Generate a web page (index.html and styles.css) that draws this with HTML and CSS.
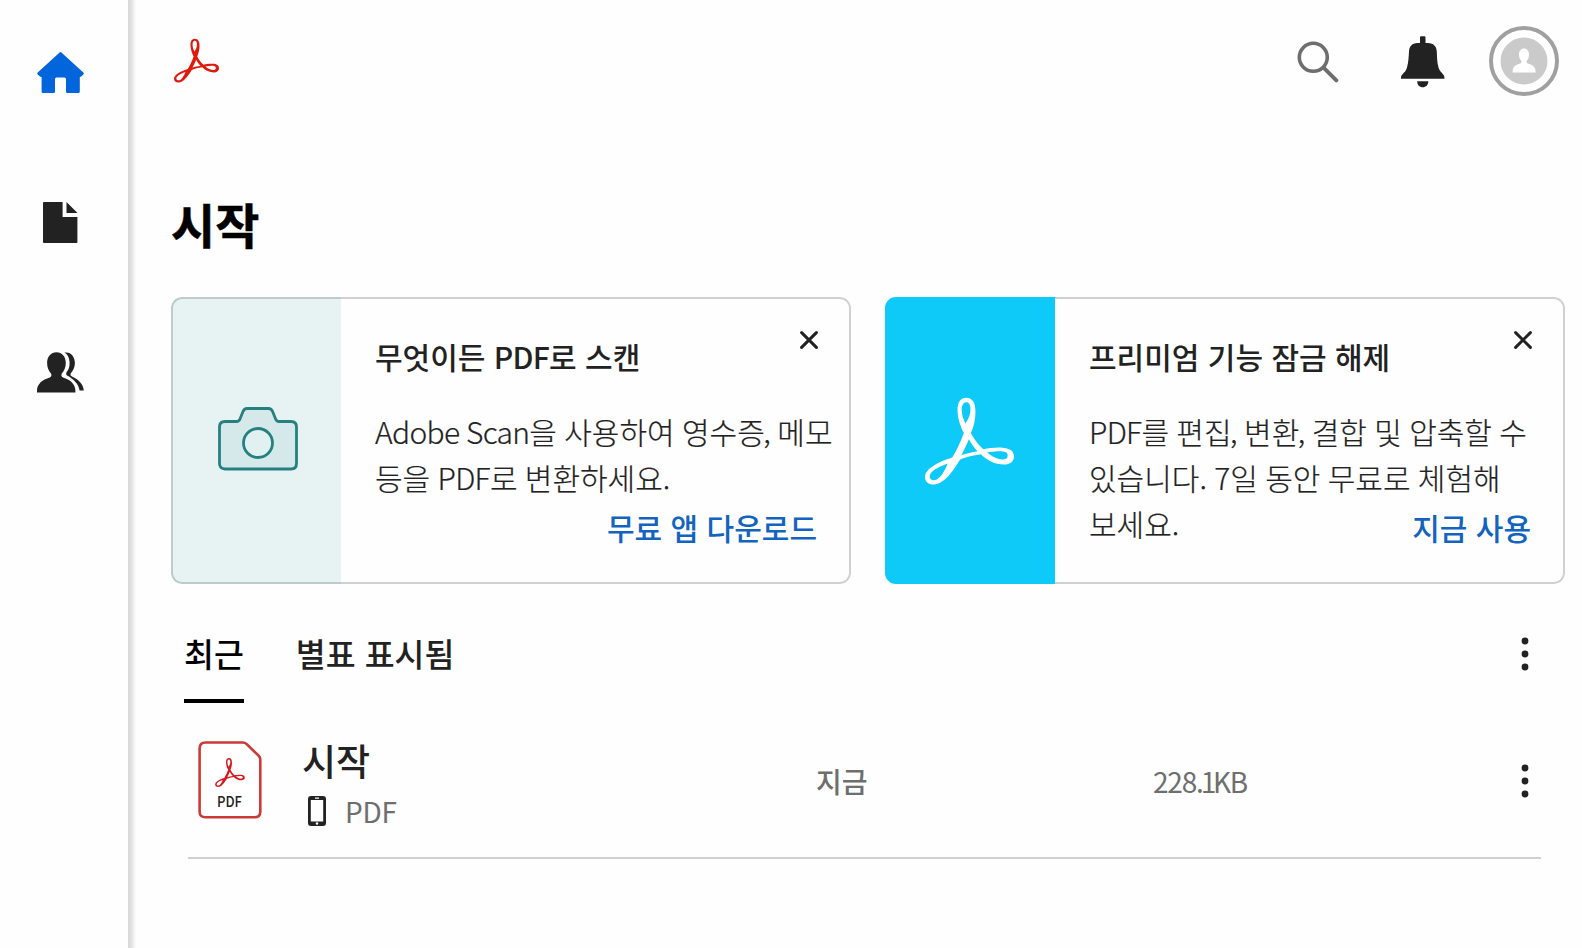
FILE: index.html
```html
<!DOCTYPE html>
<html lang="ko">
<head>
    <meta charset="UTF-8">
    <meta name="viewport" content="width=device-width, initial-scale=1.0">
    <title>Acrobat</title>
    <link rel="stylesheet" href="styles.css">
</head>
<body>
    <svg class="sprite" width="0" height="0">
        <symbol id="acrobat" viewBox="0 0 268 262">
            <path fill="currentColor" fill-rule="evenodd" d="M124 1C144 1 152 18 152 42C152 66 147 88 138 107C148 125 160 143 176 156C190 153 214 150 232 151C254 152 268 160 268 177C268 193 256 202 238 202C210 202 188 190 168 171C146 174 124 179 106 187C88 215 60 262 26 262C10 262 0 253 0 240C0 215 38 195 82 181C96 158 108 132 117 107C106 86 98 62 98 36C98 14 108 1 124 1ZM124 14C112 14 110 30 111 42C112 56 116 66 122 78C132 64 137 48 137 36C137 22 133 14 124 14ZM132 126C126 142 118 157 110 173C124 169 142 165 158 162C148 152 139 139 132 126ZM187 166C202 178 218 187 234 187C244 187 249 183 249 175C249 164 238 162 226 162C212 162 199 164 187 166ZM68 199C44 208 14 222 14 238C14 245 19 249 27 249C44 249 60 222 68 199Z"/>
        </symbol>
        <symbol id="dots" viewBox="0 0 8 34">
            <circle cx="4" cy="4" r="3.4"/>
            <circle cx="4" cy="17" r="3.4"/>
            <circle cx="4" cy="30" r="3.4"/>
        </symbol>
        <symbol id="close" viewBox="0 0 18 18">
            <path d="M1.6 1.6L16.4 16.4M16.4 1.6L1.6 16.4" fill="none" stroke="#222" stroke-width="3" stroke-linecap="round"/>
        </symbol>
    </svg>
    <div class="app">
        <nav class="sidebar">
            <a class="nav-item active">
                <svg width="47" height="41" viewBox="0 0 47 41"><path d="M22.6.5Q23.5-.3 24.4.5L46.3 20.4Q47.3 21.4 46.3 22.4L44.5 24.2Q43.7 25 42.8 25V39.5Q42.8 41 41.3 41H30.3Q29 41 29 39.7V27Q29 25.5 27.5 25.5H19.5Q18 25.5 18 27V39.7Q18 41 16.7 41H6Q4.6 41 4.6 39.5V25Q3.5 25 2.7 24.2L.7 22.4Q-.3 21.4.7 20.4Z"/></svg>
            </a>
            <a class="nav-item">
                <svg width="35" height="41" viewBox="0 0 35 41"><path d="M1 0H19.6V15H34.4V40Q34.4 41 33.4 41H1Q0 41 0 40V1Q0 0 1 0ZM23.5 0L34.5 11H23.5Z"/></svg>
            </a>
            <a class="nav-item">
                <svg width="47" height="41" viewBox="0 0 47 41"><path d="M19.5.3C25 .3 28.8 4.5 28.8 11C28.8 15.5 27 19 24.8 21.5C24 23 24.3 24.8 26 25.5C33 27.6 38.4 32 38.4 38.7V40.5H0V38.7C0 32 5.5 27.6 12.8 25.5C14.6 24.8 14.8 23 14 21.5C11.8 19 10.1 15.5 10.1 11C10.1 4.5 14 .3 19.5.3Z"/><path d="M27.5.6C33.5-.6 37.9 4.5 37.9 11C37.9 15.5 36 18.5 34 21C33 22.7 33.6 23.8 35 24.5C41.5 27.5 46.3 32 46.8 38.5H42.6C41.8 32 36.5 26.8 30 23.4C28.8 22.5 29 20.8 30 19.5C32.3 16.5 32.8 13.6 32.5 9.5C32.2 5.4 30.4 2.4 27.5.6Z"/></svg>
            </a>
        </nav>
        <main class="main">
            <header class="topbar">
                <svg class="brand" width="45" height="45"><use href="#acrobat"/></svg>
                <div class="tools">
                    <svg class="search" width="42" height="42" viewBox="0 0 42 42"><circle cx="16.3" cy="16.3" r="14" fill="none" stroke="#6e6e6e" stroke-width="3.6"/><path d="M26.8 26.8L39.3 39.3" stroke="#6e6e6e" stroke-width="4" stroke-linecap="round"/></svg>
                    <svg class="bell" width="44" height="52" viewBox="0 0 44 52"><path d="M19 1.5Q19 .3 20.2 .3H23.3Q24.5.3 24.5 1.5V7H27C32.5 7 35.5 10.5 35.8 15.5C36 21 36 26 37.5 31.5C38.5 34.8 40.5 36.3 42 38.3Q43.4 40 43.4 41.3V42.7H0V41.3Q0 40 1.5 38.3C3.4 36.3 5 34.8 6 31.5C7.5 26 7.7 21 8 15.5C8.3 10.5 11 7 16.5 7H19ZM16.2 45.3H27.3C27.3 49 25 51.3 21.7 51.3S16.2 49 16.2 45.3Z" fill="#222"/></svg>
                    <svg class="avatar" width="70" height="70" viewBox="0 0 70 70"><circle cx="35" cy="35" r="33" fill="#fff" stroke="#a0a0a0" stroke-width="4"/><circle cx="35" cy="35" r="23.5" fill="#cacaca"/><path d="M35 22.5C38 22.5 40 25 40 28.5C40 31.5 39 33.5 37.6 35C37.2 36.6 38 37.3 39.5 37.8C43.5 39 46.6 41 46.6 45.5V46.5H23.6V45.5C23.6 41 26.5 39 30.5 37.8C32 37.3 32.8 36.6 32.4 35C31 33.5 30 31.5 30 28.5C30 25 32 22.5 35 22.5Z" fill="#fff"/></svg>
                </div>
            </header>

            <h1>시작</h1>

            <section class="cards">
                <article class="card">
                    <div class="card-art scan">
                        <svg width="80" height="64" viewBox="0 0 80 64"><path d="M7 14.5H18.5C20.5 14.5 21.3 13.8 22 12L25 4.5C25.8 2.5 27 1.5 29 1.5H50.5C52.5 1.5 53.8 2.5 54.6 4.5L57.6 12C58.3 13.8 59.2 14.5 61 14.5H73Q78.5 14.5 78.5 20V56.5Q78.5 62 73 62H7Q1.5 62 1.5 56.5V20Q1.5 14.5 7 14.5Z" fill="#d6e9ea" stroke="#268080" stroke-width="2.8"/><circle cx="40" cy="36" r="14.5" fill="#e1f0f0" stroke="#268080" stroke-width="2.8"/></svg>
                    </div>
                    <div class="card-body">
                        <h2>무엇이든 <span class="latin">PDF</span>로 스캔</h2>
                        <p><span class="latin">Adobe Scan</span>을 사용하여 영수증<span class="comma">,</span> 메모<br>등을 <span class="latin">PDF</span>로 변환하세요.</p>
                        <a class="card-link">무료 앱 다운로드</a>
                        <svg class="close" width="18" height="18"><use href="#close"/></svg>
                    </div>
                </article>
                <article class="card">
                    <div class="card-art premium">
                        <svg width="89" height="88"><use href="#acrobat"/></svg>
                    </div>
                    <div class="card-body">
                        <h2>프리미엄 기능 잠금 해제</h2>
                        <p><span class="latin">PDF</span>를 편집<span class="comma">,</span> 변환<span class="comma">,</span> 결합 및 압축할 수<br>있습니다. 7일 동안 무료로 체험해<br>보세요.</p>
                        <a class="card-link">지금 사용</a>
                        <svg class="close" width="18" height="18"><use href="#close"/></svg>
                    </div>
                </article>
            </section>

            <div class="tabs">
                <a class="tab selected">최근</a>
                <a class="tab">별표 표시됨</a>
                <svg class="more" width="8" height="34"><use href="#dots"/></svg>
            </div>

            <div class="file-row">
                <svg class="file-icon" width="64" height="78" viewBox="0 0 64 78">
                    <path d="M7.5 1.5H44.5Q47 1.5 48.7 3.2L60.5 14.5Q62.3 16.2 62.3 18.5V70.5Q62.3 76.3 56.5 76.3H7.5Q1.6 76.3 1.6 70.5V7.5Q1.6 1.5 7.5 1.5Z" fill="#fff" stroke="#cb3a36" stroke-width="2.6"/>
                    <use href="#acrobat" x="17" y="17" width="30" height="29"/>
                    <text x="31.5" y="66" text-anchor="middle" textLength="25" lengthAdjust="spacingAndGlyphs">PDF</text>
                </svg>
                <div class="file-name">
                    <div class="name">시작</div>
                    <div class="meta">
                        <svg width="18" height="30" viewBox="0 0 18 30"><path fill-rule="evenodd" d="M3 0H15Q18 0 18 3V27Q18 30 15 30H3Q0 30 0 27V3Q0 0 3 0ZM2.8 4V25.5H15.2V4ZM7 1.5V2.7H11V1.5ZM9 26.2A1.3 1.3 0 1 0 9 28.8A1.3 1.3 0 1 0 9 26.2Z" fill="#222"/></svg>
                        <span>PDF</span>
                    </div>
                </div>
                <div class="file-date">지금</div>
                <div class="file-size">228<span class="decimal">.1</span>KB</div>
                <svg class="more" width="8" height="34"><use href="#dots"/></svg>
            </div>
        </main>
    </div>
</body>
</html>
```
FILE: styles.css
```css
* {
    box-sizing: border-box;
}

body {
    margin: 0;
    background: #fefefe;
    color: #222;
    font-family: "Noto Sans CJK KR", sans-serif;
}

.sprite {
    position: absolute;
}

svg {
    display: block;
    flex: none;
}

h1, h2, p {
    margin: 0;
}

.app {
    display: flex;
    height: 948px;
    overflow: hidden;
}

/* sidebar */
.sidebar {
    flex: none;
    width: 136px;
    padding: 52px 16px 0 0;
    display: flex;
    flex-direction: column;
    align-items: center;
    gap: 109px;
    background: linear-gradient(to right, #fefefe 128px, #d8d8d8 128px, #e0e0e0 131px, #fefefe 136px);
}

.nav-item {
    display: block;
    fill: #222;
}

.nav-item.active {
    fill: #0265dc;
}

/* main column */
.main {
    flex: 1;
    padding: 0 17px 0 35px;
}

.topbar {
    display: flex;
    justify-content: space-between;
    height: 180px;
    padding: 0 6.5px 0 3px;
}

.brand {
    margin-top: 38px;
    color: #e1190c;
}

.tools {
    display: flex;
    align-items: flex-start;
}

.search {
    margin-top: 41px;
}

.bell {
    margin: 35.5px 0 0 62px;
}

.avatar {
    margin: 25.5px 0 0 44px;
}

h1 {
    height: 117px;
    padding-top: 9px;
    font-size: 48px;
    line-height: 68px;
    font-weight: 700;
    color: #000;
    -webkit-text-stroke: 0.5px #000;
}

/* promo cards */
.cards {
    display: flex;
    gap: 34px;
}

.card {
    flex: none;
    display: flex;
    width: 680px;
    height: 287px;
    border-radius: 11px;
    overflow: hidden;
}

.card-art {
    flex: none;
    width: 170px;
    display: flex;
    align-items: center;
    justify-content: center;
}

.scan {
    background: #e6f3f2;
    border: 2px solid #bfcaca;
    border-right: none;
    border-radius: 11px 0 0 11px;
    padding-left: 2px;
    padding-bottom: 3px;
}

.premium {
    background: #0dcaf8;
    color: #fff;
    padding-right: 1px;
}

.card-body {
    position: relative;
    flex: 1;
    padding: 34px 0 0 34px;
    border: 2px solid #d0d0d0;
    border-left: none;
    border-radius: 0 11px 11px 0;
    white-space: nowrap;
}

.card-body h2 {
    font-size: 30px;
    line-height: 46px;
    font-weight: 500;
}

.card-body p {
    margin-top: 29px;
    font-size: 30px;
    line-height: 46px;
    font-weight: 300;
    word-spacing: -1.1px;
    -webkit-text-stroke: 0.2px #222;
}

.latin {
    letter-spacing: -0.7px;
}

.comma {
    margin-left: -1.5px;
    letter-spacing: -0.8px;
}

.card-link {
    position: absolute;
    right: 32px;
    bottom: 32px;
    font-size: 30px;
    line-height: 46px;
    font-weight: 500;
    color: #1264bf;
}

.close {
    position: absolute;
    top: 32px;
    right: 31px;
}

/* tabs */
.tabs {
    display: flex;
    gap: 52px;
    height: 119px;
    padding: 46px 36px 0 13px;
}

.tab {
    height: 73px;
    font-size: 32.5px;
    line-height: 46px;
    font-weight: 500;
}

.tab.selected {
    color: #000;
    border-bottom: 4px solid #000;
}

.more {
    margin-left: auto;
    margin-top: 7px;
    fill: #222;
}

/* file list */
.file-row {
    display: flex;
    height: 156px;
    margin: 0 24px 0 17px;
    padding: 37px 12px 0 10px;
    border-bottom: 2px solid #d0d0d0;
}

.file-icon {
    margin-top: 1px;
    color: #d7191c;
}

.file-icon text {
    font-size: 15px;
    font-weight: 500;
    fill: #222;
}

.file-name {
    flex: none;
    width: 554px;
    padding-left: 40px;
}

.name {
    margin-top: -7px;
    font-size: 37px;
    line-height: 54px;
    font-weight: 500;
}

.meta {
    display: flex;
    align-items: center;
    gap: 19px;
    height: 48px;
    padding-left: 6px;
    font-size: 28px;
    letter-spacing: -0.3px;
    color: #6e6e6e;
}

.file-date, .file-size {
    margin-top: 20px;
    font-size: 28px;
    line-height: 42px;
    font-weight: 500;
    color: #6e6e6e;
}

.file-date {
    flex: none;
    width: 337px;
}

.file-size {
    font-weight: 400;
    letter-spacing: -1.2px;
}

.decimal {
    letter-spacing: -3.2px;
}

.file-row .more {
    margin-top: 24px;
}
```
